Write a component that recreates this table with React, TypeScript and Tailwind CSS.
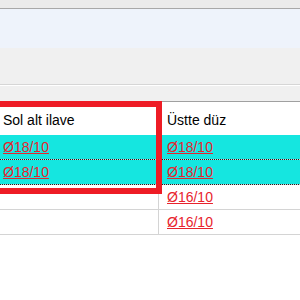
import React from 'react';

type Row = { left?: string; right: string; selected?: boolean };

const rows: Row[] = [
  { left: 'Ø18/10', right: 'Ø18/10', selected: true },
  { left: 'Ø18/10', right: 'Ø18/10', selected: true },
  { right: 'Ø16/10' },
  { right: 'Ø16/10' },
];

const Link = ({ children }: { children: React.ReactNode }) => (
  <span className="text-[#e8232d] underline decoration-[#e8232d] underline-offset-[1px]">{children}</span>
);

export default function App() {
  return (
    <div className="w-[300px] h-[300px] overflow-hidden flex flex-col bg-white font-['Liberation_Sans',Arial,sans-serif] text-[14px] text-black">
      {/* window chrome */}
      <div className="h-[8px] shrink-0 bg-[#ebebeb]" />
      <div className="h-px shrink-0 bg-[#a8a8a8]" />
      <div className="h-[39px] shrink-0 bg-[#eef3fb]" />
      <div className="h-[36px] shrink-0 bg-[#f0f0f0]" />
      <div className="h-px shrink-0 bg-[#d6d6d6]" />
      <div className="h-px shrink-0 bg-white" />
      <div className="h-[15px] shrink-0 bg-[#f0f0f0]" />

      {/* grid */}
      <div className="relative flex-1">
        <div className="h-px bg-[#a0a0a0]" />
        <div className="grid grid-cols-[158px_1px_1fr] h-[33px] items-center pt-[3px]">
          <div className="pl-[3px]">Sol alt ilave</div>
          <div className="h-full bg-white" />
          <div className="pl-[8px]">Üstte düz</div>
        </div>
        {rows.map((r, i) => (
          <div key={i}>
            <div
              className={`grid grid-cols-[158px_1px_1fr] h-[24px] items-center ${
                r.selected ? 'bg-[#15e6e0]' : 'bg-white'
              }`}
            >
              <div className="pl-[3px]">{r.left && <Link>{r.left}</Link>}</div>
              <div className={`h-full ${r.selected ? '' : 'bg-[#d4d4d4]'}`} />
              <div className="pl-[8px]">
                <Link>{r.right}</Link>
              </div>
            </div>
            {r.selected ? (
              <div className="h-px bg-[repeating-linear-gradient(90deg,#202020_0_1px,#cfcfcf_1px_2px)]" />
            ) : (
              <div className="h-px bg-[#d4d4d4]" />
            )}
          </div>
        ))}

        {/* highlight frame around the left column */}
        <div className="absolute left-[-6px] top-0 w-[168px] h-[93px] border-[6px] border-[#ee1c25] pointer-events-none" />
      </div>
    </div>
  );
}
